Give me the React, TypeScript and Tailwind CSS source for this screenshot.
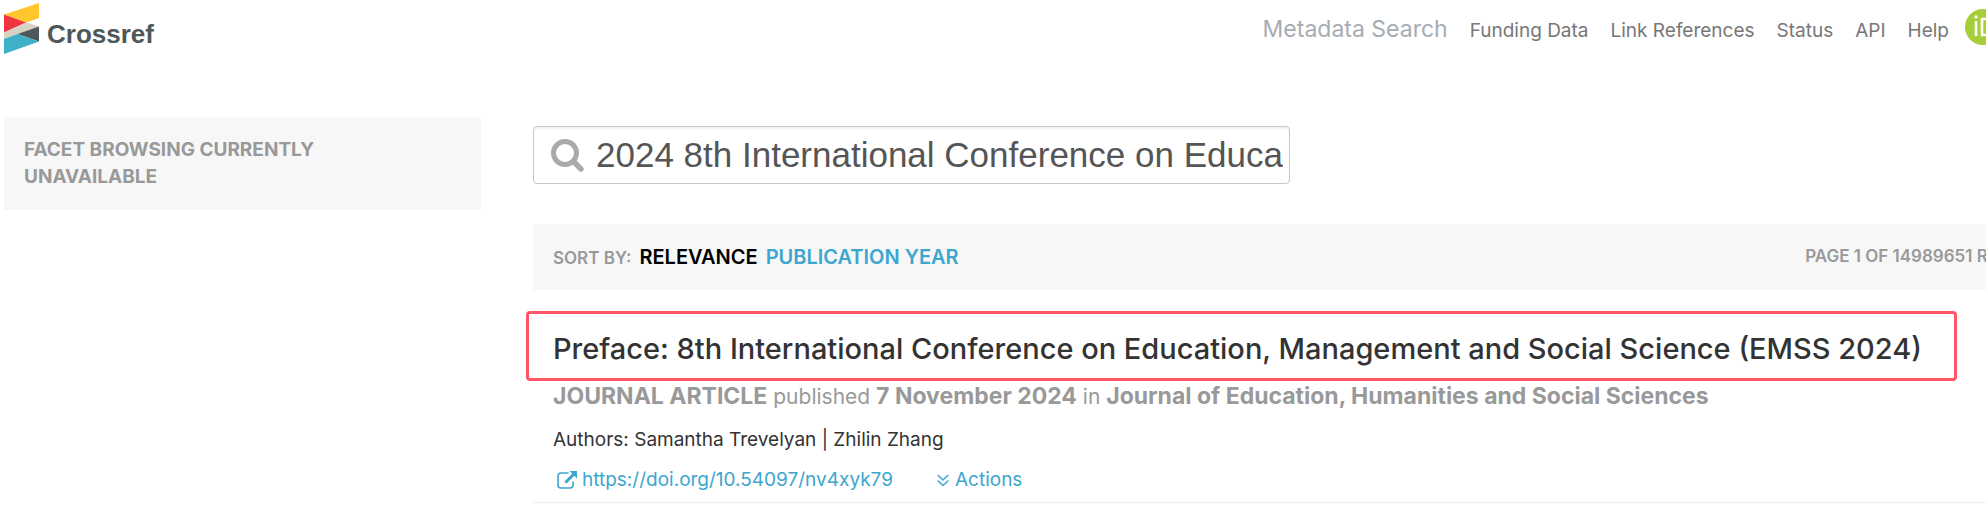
const navLinks = ['Funding Data', 'Link References', 'Status', 'API', 'Help'];

const Logo = () => (
  <a href="#" aria-label="Crossref" className="flex items-start gap-2">
    <svg width="35" height="51" viewBox="0 0 35 51" aria-hidden="true">
      <path d="M0 11.500 35 0v15L22 19.500Z" fill="#ffc72c" />
      <path d="M0 11.500 22 19.500 0 29.500Z" fill="#ef3340" />
      <path d="M22 19.500 35 23.500 13.500 31 0 36v-6.500Z" fill="#d8d2c4" />
      <path d="M35 23.500v15L13.500 31Z" fill="#4f5858" />
      <path d="M0 36 13.500 31 35 38.500 0 51Z" fill="#3eb1c8" />
    </svg>
    <span className="pt-4 font-['Liberation_Sans',sans-serif] text-[26px] leading-[30px] font-bold text-[#4f5858]">
      Crossref
    </span>
  </a>
);

const Header = () => (
  <header className="flex items-start justify-between pt-[3px]">
    <Logo />
    <nav className="-mr-[15px] flex shrink-0 items-baseline gap-[22px] pt-2.5 text-[#777]">
      <a href="#" className="text-[23px] leading-8 text-[#a5acb3]">
        Metadata Search
      </a>
      {navLinks.map((label) => (
        <a key={label} href="#" className="text-[19px]">
          {label}
        </a>
      ))}
      <a href="#" aria-label="ORCID" className="-mt-1 -ml-1.5 self-start">
        <svg width="36" height="36" viewBox="0 0 36 36" aria-hidden="true">
          <circle cx="18" cy="18" r="18" fill="#a6ce39" />
          <circle cx="11" cy="8" r="1.700" fill="#fff" />
          <path d="M9.700 12h2.600v15H9.700z" fill="#fff" />
          <path d="M17 10h5.500a8 8 0 0 1 0 16H17z" fill="none" stroke="#fff" strokeWidth="2.600" />
        </svg>
      </a>
    </nav>
  </header>
);

const SearchBox = () => (
  <form className="flex h-[58px] w-[757px] items-center gap-3 rounded border border-[#c8c8c8] pr-1.5 pl-[17px] shadow-[inset_0_2px_2px_rgba(0,0,0,0.06)]">
    <svg width="33" height="33" viewBox="0 0 33 33" className="shrink-0" fill="none" stroke="#aaa" aria-hidden="true">
      <circle cx="14" cy="14" r="11.500" strokeWidth="5" />
      <path d="m22.500 22.500 7.500 7.500" strokeWidth="5.400" strokeLinecap="round" />
    </svg>
    <input
      type="text"
      aria-label="Search"
      defaultValue="2024 8th International Conference on Education, Management and Social Science"
      className="min-w-0 flex-1 bg-transparent font-['Liberation_Sans',sans-serif] text-[35px] text-[#555] outline-none"
    />
  </form>
);

const SortBar = () => (
  <div className="flex h-[66px] items-center justify-between bg-[#f7f7f7] px-5 font-semibold text-[#999]">
    <div className="flex items-baseline gap-2">
      <span className="text-[17px]">SORT BY:</span>
      <a href="#" className="text-[20px] text-black">
        RELEVANCE
      </a>
      <a href="#" className="text-[20px] text-[#3ca6cf]">
        PUBLICATION YEAR
      </a>
    </div>
    <span className="text-[17px]">PAGE 1 OF 14989651 RESULTS</span>
  </div>
);

const Result = () => (
  <article className="border-b border-[#eee] pb-1.5 pl-5">
    <h2 className="-ml-[27px] w-fit rounded border-3 border-[#ff5566] pt-3.5 pr-8 pb-2 pl-6 text-[29px] leading-[42px] font-medium whitespace-nowrap text-[#333]">
      Preface: 8th International Conference on Education, Management and Social Science (EMSS 2024)
    </h2>
    <p className="text-[21px] leading-[30px] text-[#999]">
      <b className="text-[23px] font-bold">JOURNAL ARTICLE</b> published{' '}
      <b className="text-[23px] font-bold">7 November 2024</b> in{' '}
      <b className="text-[23px] font-bold">Journal of Education, Humanities and Social Sciences</b>
    </p>
    <p className="mt-3 text-[19px] leading-[32px] text-[#333]">Authors: Samantha Trevelyan | Zhilin Zhang</p>
    <div className="mt-2 flex items-center gap-11 text-[19px] leading-[32px] text-[#3ca6cf]">
      <a href="#" className="flex items-center gap-1 pl-1">
        <svg width="21" height="18" viewBox="0 0 21 18" fill="none" stroke="currentColor" aria-hidden="true">
          <path d="M11.500 2H4a3 3 0 0 0-3 3v9a3 3 0 0 0 3 3h9a3 3 0 0 0 3-3v-3.500" strokeWidth="1.600" />
          <path d="M8.500 11.500 17 3" strokeWidth="3" />
          <path d="M12.500 0H20v7.500z" fill="currentColor" stroke="none" />
        </svg>
        https://doi.org/10.54097/nv4xyk79
      </a>
      <button type="button" className="flex items-center gap-1.5">
        <svg width="12" height="13" viewBox="0 0 12 13" fill="none" stroke="currentColor" strokeWidth="1.600" aria-hidden="true">
          <path d="m.7 1 5.300 5 5.300-5M.7 6.500l5.300 5 5.300-5" />
        </svg>
        Actions
      </button>
    </div>
  </article>
);

const App = () => {
  return (
    <div className="overflow-hidden bg-white pl-1 font-['Inter',sans-serif]">
      <Header />
      <div className="-mr-[86px] flex items-start gap-[52px] pt-[63px]">
        <aside className="w-[477px] shrink-0 bg-[#f7f7f7] px-5 pt-[19px] pb-5 text-[19px] leading-[27px] font-bold text-[#999]">
          FACET BROWSING CURRENTLY
          <br />
          UNAVAILABLE
        </aside>
        <main className="min-w-0 flex-1 pt-[9px]">
          <SearchBox />
          <div className="mt-10 mb-[21px]">
            <SortBar />
          </div>
          <Result />
        </main>
      </div>
    </div>
  );
};

export default App;
